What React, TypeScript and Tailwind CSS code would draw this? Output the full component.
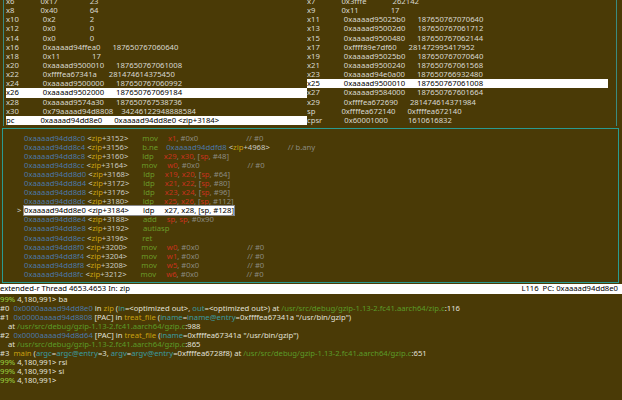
import React from 'react';

const BG = 'bg-[#4a3a06]';
type Seg = [string, string];

const regs: [string, string, string, string, string, string, number][] = [
  ['x6', '0x17', '23', 'x7', '0x3fffe', '262142', 0],
  ['x8', '0x40', '64', 'x9', '0x11', '17', 0],
  ['x10', '0x2', '2', 'x11', '0xaaaad95025b0', '187650767070640', 0],
  ['x12', '0x0', '0', 'x13', '0xaaaad95002d0', '187650767061712', 0],
  ['x14', '0x0', '0', 'x15', '0xaaaad9500480', '187650767062144', 0],
  ['x16', '0xaaaad94ffea0', '187650767060640', 'x17', '0xffff89e7df60', '281472995417952', 0],
  ['x18', '0x11', '17', 'x19', '0xaaaad95025b0', '187650767070640', 0],
  ['x20', '0xaaaad9500010', '187650767061008', 'x21', '0xaaaad9500240', '187650767061568', 0],
  ['x22', '0xffffea67341a', '281474614375450', 'x23', '0xaaaad94e0a00', '187650766932480', 0],
  ['x24', '0xaaaad9500000', '187650767060992', 'x25', '0xaaaad9500010', '187650767061008', 2],
  ['x26', '0xaaaad9502000', '187650767069184', 'x27', '0xaaaad9584000', '187650767601664', 1],
  ['x28', '0xaaaad9574a30', '187650767538736', 'x29', '0xffffea672690', '281474614371984', 0],
  ['x30', '0x79aaaad94d8808', '34246122948888584', 'sp', '0xffffea672140', '0xffffea672140', 0],
  ['pc', '0xaaaad94dd8e0', '0xaaaad94dd8e0 <zip+3184>', 'cpsr', '0x60001000', '1610616832', 1],
];

const half = (n: string, h: string, d: string) => n.padEnd(15) + h.padEnd(20) + d;

const dis: [string, string, string, Seg[], string][] = [
  ['c0', '3152', 'mov', [['x1', 'r'], [', #0x0', 'g']], '// #0'],
  ['c4', '3156', 'b.ne', [['0xaaaad94ddfd8 ', 'b'], ['<', 'w'], ['zip', 'y'], ['+4968>', 'w']], '  // b.any'],
  ['c8', '3160', 'ldp', [['x29', 'r'], [', ', 'g'], ['x30', 'r'], [', [', 'g'], ['sp', 'r'], [', #48]', 'g']], ''],
  ['cc', '3164', 'mov', [['w0', 'r'], [', #0x0', 'g']], '// #0'],
  ['d0', '3168', 'ldp', [['x19', 'r'], [', ', 'g'], ['x20', 'r'], [', [', 'g'], ['sp', 'r'], [', #64]', 'g']], ''],
  ['d4', '3172', 'ldp', [['x21', 'r'], [', ', 'g'], ['x22', 'r'], [', [', 'g'], ['sp', 'r'], [', #80]', 'g']], ''],
  ['d8', '3176', 'ldp', [['x23', 'r'], [', ', 'g'], ['x24', 'r'], [', [', 'g'], ['sp', 'r'], [', #96]', 'g']], ''],
  ['dc', '3180', 'ldp', [['x25', 'r'], [', ', 'g'], ['x26', 'r'], [', [', 'g'], ['sp', 'r'], [', #112]', 'g']], ''],
  ['e0', '3184', 'ldp', [['x27, x28, [sp, #128]', 'k']], 'HL'],
  ['e4', '3188', 'add', [['sp', 'r'], [', ', 'g'], ['sp', 'r'], [', #0x90', 'g']], ''],
  ['e8', '3192', 'autiasp', [], ''],
  ['ec', '3196', 'ret', [], ''],
  ['f0', '3200', 'mov', [['w0', 'r'], [', #0x0', 'g']], '// #0'],
  ['f4', '3204', 'mov', [['w1', 'r'], [', #0x0', 'g']], '// #0'],
  ['f8', '3208', 'mov', [['w5', 'r'], [', #0x0', 'g']], '// #0'],
  ['fc', '3212', 'mov', [['w6', 'r'], [', #0x0', 'g']], '// #0'],
];

const col: Record<string, string> = {
  r: 'text-[#c8321e]', g: 'text-[#8a8a80]', b: 'text-[#4a78a8]', y: 'text-[#c8a010]',
  w: 'text-[#c8c8c0]', k: 'text-black', n: 'text-[#6a9a28]', t: 'text-[#3a9aa0]',
  p: 'text-[#5a9a28]', l: 'text-[#9ad040]', x: 'text-[#e0e0d8]',
};

function Line({ segs }: { segs: Seg[] }) {
  return (
    <div className="h-[9.1px] leading-[9.1px] whitespace-pre">
      {segs.map(([t, c], i) => (
        <span key={i} className={col[c]}>{t}</span>
      ))}
    </div>
  );
}

const cmd: Seg[][] = [
  [['99%', 'l'], [' 4,180,991> ba', 'x']],
  [['#0  ', 'x'], ['0x0000aaaad94dd8e0', 'b'], [' in ', 'x'], ['zip', 'y'], [' (', 'x'], ['in', 't'], ['=<optimized out>, ', 'x'], ['out', 't'], ['=<optimized out>) at ', 'x'], ['/usr/src/debug/gzip-1.13-2.fc41.aarch64/zip.c', 'p'], [':116', 'x']],
  [['#1  ', 'x'], ['0x0000aaaad94d8808', 'b'], [' [PAC] in ', 'x'], ['treat_file', 'y'], [' (', 'x'], ['iname', 't'], ['=', 'x'], ['iname@entry', 't'], ['=0xffffea67341a "/usr/bin/gzip")', 'x']],
  [['    at ', 'x'], ['/usr/src/debug/gzip-1.13-2.fc41.aarch64/gzip.c', 'p'], [':988', 'x']],
  [['#2  ', 'x'], ['0x0000aaaad94d8d64', 'b'], [' [PAC] in ', 'x'], ['treat_file', 'y'], [' (', 'x'], ['iname', 't'], ['=0xffffea67341a "/usr/bin/gzip")', 'x']],
  [['    at ', 'x'], ['/usr/src/debug/gzip-1.13-2.fc41.aarch64/gzip.c', 'p'], [':865', 'x']],
  [['#3  ', 'x'], ['main', 'y'], [' (', 'x'], ['argc', 't'], ['=', 'x'], ['argc@entry', 't'], ['=3, ', 'x'], ['argv', 't'], ['=', 'x'], ['argv@entry', 't'], ['=0xffffea6728f8) at ', 'x'], ['/usr/src/debug/gzip-1.13-2.fc41.aarch64/gzip.c', 'p'], [':651', 'x']],
  [['99%', 'l'], [' 4,180,991> rsi', 'x']],
  [['99%', 'l'], [' 4,180,991> si', 'x']],
  [['99%', 'l'], [' 4,180,991>', 'x']],
];

export default function App() {
  return (
    <div className={`w-[622px] h-[400px] overflow-hidden ${BG} text-[#d8d8d0] text-[7.7px] font-['DejaVu_Sans_Mono']`}>
      <div className="h-[126px] overflow-hidden border-l border-r border-[#3a8a80] mx-[3px] mr-[5px]">
        <div className="-mt-[3px] pl-[2px]">
          {regs.map(([a, b, c, d, e, f, hl]) => (
            <div key={a} className="h-[9.15px] leading-[9.15px] whitespace-pre flex">
              <span className={`w-[301px] ${hl === 1 ? 'bg-white text-black' : ''}`}>{half(a, b, c)}</span>
              <span className={`w-[301px] ${hl === 2 ? 'bg-white text-black' : ''}`}>{half(d, e, f)}</span>
            </div>
          ))}
        </div>
      </div>
      <div className="mt-[2px] mx-[2px] mr-[3px] h-[155px] border border-[#2a9a90] pt-[5px] pl-[2px]">
        {dis.map(([s, off, m, ops, cm]) => {
          const hl = cm === 'HL';
          const opLen = ops.reduce((n, [t]) => n + t.length, 0);
          const pad = cm && !hl ? ' '.repeat(Math.max(1, 32 - opLen)) + cm : '';
          return (
            <div key={s} className="h-[9.05px] leading-[9.05px] whitespace-pre flex">
              <span className="w-[19px] pl-[12px] text-[#c8c8c0]">{hl ? '>' : ''}</span>
              <span className={hl ? 'bg-white text-black outline outline-1 outline-[#888]' : ''}>
                <span className={hl ? '' : col.b}>{'0xaaaad94dd8' + s}</span>
                <span className={hl ? '' : col.w}> &lt;</span>
                <span className={hl ? '' : col.y}>zip</span>
                <span className={hl ? '' : col.w}>{'+' + off + '>'.padEnd(8)}</span>
                <span className={hl ? '' : col.n}>{m.padEnd(8)}</span>
                {ops.map(([t, c], i) => (
                  <span key={i} className={hl ? '' : col[c]}>{t}</span>
                ))}
              </span>
              <span className={col.g}>{pad}</span>
            </div>
          );
        })}
      </div>
      <div className="h-[9.5px] leading-[9.5px] bg-white text-black whitespace-pre flex justify-between pr-[4px] mt-[1px]">
        <span>extended-r Thread 4653.4653 In: zip</span>
        <span>L116  PC: 0xaaaad94dd8e0</span>
      </div>
      <div className="pt-[1px]">
        {cmd.map((s, i) => <Line key={i} segs={s} />)}
      </div>
    </div>
  );
}
